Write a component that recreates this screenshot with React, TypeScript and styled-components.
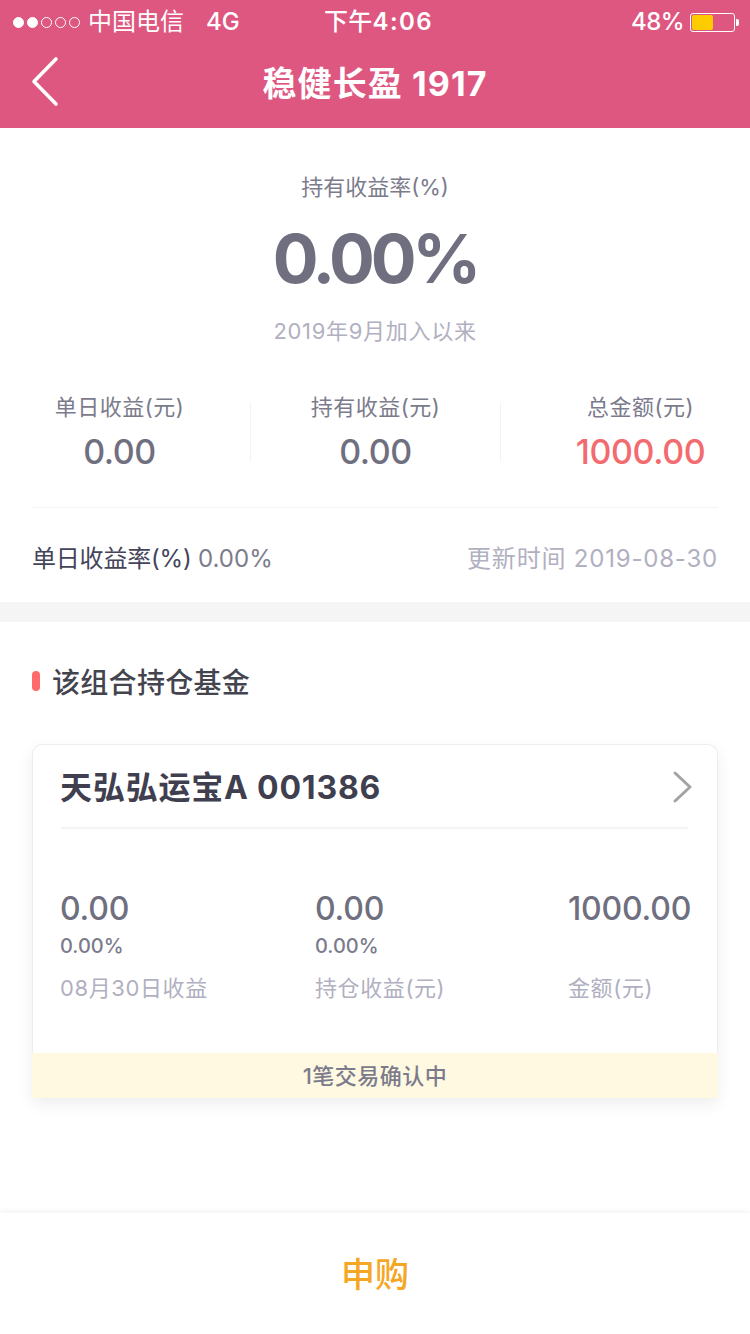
import React from "react";
import styled, { createGlobalStyle } from "styled-components";

const GlobalStyle = createGlobalStyle`
  html, body {
    margin: 0;
    padding: 0;
    background: #fff;
  }
  * {
    box-sizing: border-box;
  }
  body {
    font-family: Inter, "Noto Sans CJK SC", sans-serif;
  }
`;

const Page = styled.div`
  width: 750px;
  height: 1334px;
  display: flex;
  flex-direction: column;
  overflow: hidden;
  background: #fff;
`;

const Header = styled.header`
  height: 128px;
  background: #de5781;
  color: #fff;
`;

const StatusBar = styled.div`
  height: 40px;
  display: grid;
  grid-template-columns: 1fr auto 1fr;
  align-items: center;
  padding: 2px 12px 0 13px;
  font-size: 24px;
  line-height: 40px;
`;

const StatusLeft = styled.div`
  display: flex;
  align-items: center;
`;

const Signal = styled.div`
  display: flex;
  gap: 3px;
  margin-right: 8px;
`;

const Dot = styled.span<{ $on: boolean }>`
  width: 11px;
  height: 11px;
  border-radius: 50%;
  border: 1px solid #fff;
  background: ${(p) => (p.$on ? "#fff" : "transparent")};
`;

const Network = styled.span`
  margin-left: 22px;
  font-size: 24px;
  font-weight: 500;
`;

const Clock = styled.div`
  font-weight: 500;
  letter-spacing: 0.3px;
  padding-left: 6px;

  b {
    font-weight: 600;
    letter-spacing: 1.4px;
  }
`;

const StatusRight = styled.div`
  display: flex;
  align-items: center;
  justify-content: flex-end;
  font-weight: 500;
  letter-spacing: -0.6px;
`;

const Battery = styled.div`
  width: 45px;
  height: 19px;
  margin-left: 6px;
  margin-right: 3px;
  padding: 1px;
  border: 1px solid #fff;
  border-radius: 3px;
  position: relative;

  &::after {
    content: "";
    position: absolute;
    right: -5px;
    top: 5px;
    width: 3px;
    height: 7px;
    background: #fff;
    border-radius: 0 2px 2px 0;
  }
`;

const BatteryFill = styled.div`
  height: 100%;
  background: #ffcc00;
  border-radius: 2px;
`;

const NavBar = styled.div`
  height: 88px;
  display: flex;
  align-items: center;
  justify-content: center;
  position: relative;
`;

const BackIcon = styled.svg`
  position: absolute;
  left: 30px;
  top: 16px;
  width: 30px;
  height: 52px;
`;

const NavTitle = styled.h1`
  margin: 0;
  font-size: 34px;
  font-weight: 700;
  line-height: 44px;
  letter-spacing: 1.1px;
`;

const Summary = styled.section`
  padding: 40px 32px 0;
  height: 474px;
`;

const SummaryLabel = styled.div`
  text-align: center;
  font-size: 22px;
  line-height: 38px;
  color: #7b7b8c;
`;

const BigRate = styled.div`
  text-align: center;
  margin-top: 11px;
  font-size: 68px;
  line-height: 82px;
  font-weight: 700;
  letter-spacing: -4.2px;
  color: #6f6f80;
`;

const SinceText = styled.div`
  text-align: center;
  margin-top: 14px;
  font-size: 22px;
  line-height: 36px;
  letter-spacing: 0.7px;
  color: #b0b0c1;
`;

const Stats = styled.div`
  display: grid;
  grid-template-columns: 219px 250px 217px;
  margin-top: 53px;
  height: 106px;
  border-bottom: 1px solid #f3f3f5;
`;

const Stat = styled.div<{ $divider?: boolean; $left?: number; $right?: number }>`
  height: 60px;
  text-align: center;
  border-right: ${(p) => (p.$divider ? "1px solid #f3f3f5" : "none")};
  padding-left: ${(p) => p.$left ?? 0}px;
  padding-right: ${(p) => p.$right ?? 0}px;
`;

const StatLabel = styled.div`
  margin-top: -12px;
  font-size: 22px;
  line-height: 34px;
  letter-spacing: 0.5px;
  color: #7b7b8c;
`;

const StatValue = styled.div<{ $red?: boolean }>`
  margin-top: 3px;
  font-size: 34px;
  line-height: 50px;
  font-weight: 500;
  letter-spacing: -0.4px;
  color: ${(p) => (p.$red ? "#f26b6e" : "#6f6f80")};
`;

const RateRow = styled.div`
  display: flex;
  justify-content: space-between;
  align-items: center;
  height: 93px;
  padding-top: 3px;
  font-size: 24px;
`;

const RateLeft = styled.div`
  color: #44445a;
  white-space: nowrap;
  letter-spacing: -0.2px;

  span {
    color: #7b7b8c;
    letter-spacing: 0;
  }
`;

const RateRight = styled.div`
  color: #b0b0c1;
  letter-spacing: 0.8px;
`;

const Band = styled.div`
  height: 20px;
  background: #f5f5f5;
`;

const Holdings = styled.section`
  padding: 0 32px;
`;

const SectionTitle = styled.h2`
  margin: 0;
  height: 122px;
  padding-bottom: 4px;
  display: flex;
  align-items: center;
  gap: 12px;
  font-size: 28px;
  font-weight: 500;
  letter-spacing: 0.3px;
  color: #44444f;

  &::before {
    content: "";
    width: 8px;
    height: 20px;
    border-radius: 4px;
    background: #ff6b6b;
  }
`;

const Card = styled.div`
  height: 354px;
  display: flex;
  flex-direction: column;
  border: 1px solid #ededed;
  border-bottom: 0;
  border-radius: 10px 10px 0 0;
  box-shadow: 0 6px 16px rgba(0, 0, 0, 0.07);
  background: #fff;
`;

const CardHead = styled.div`
  margin: 0 29px 0 28px;
  height: 84px;
  display: flex;
  align-items: center;
  justify-content: space-between;
  border-bottom: 2px solid #f4f4f4;
`;

const FundName = styled.div`
  margin-left: -1px;
  padding-bottom: 2px;
  font-size: 32px;
  font-weight: 700;
  color: #3f3f50;
  letter-spacing: 0.8px;
`;

const ChevronIcon = styled.svg`
  width: 22px;
  height: 34px;
  margin: 2px -6px 0 0;
`;

const CardBody = styled.div`
  flex: 1;
  display: grid;
  grid-template-columns: 255px 253px auto;
  padding: 60px 0 0 27px;
`;

const Cell = styled.div`
  display: flex;
  flex-direction: column;
`;

const CellValue = styled.div`
  font-size: 32px;
  line-height: 40px;
  font-weight: 500;
  letter-spacing: -0.2px;
  color: #6f6f80;
`;

const CellRate = styled.div`
  height: 30px;
  margin-top: 2px;
  font-size: 20px;
  line-height: 30px;
  font-weight: 500;
  color: #7b7b8c;
`;

const CellLabel = styled.div`
  margin-top: 9px;
  font-size: 22px;
  line-height: 36px;
  letter-spacing: 0.6px;
  color: #b0b0c1;
`;

const Notice = styled.div`
  height: 45px;
  margin: 0 -1px;
  padding-bottom: 3px;
  display: flex;
  align-items: center;
  justify-content: center;
  background: #fff9e1;
  font-size: 22px;
  font-weight: 500;
  letter-spacing: 0.5px;
  color: #7b7b8c;
`;

const Footer = styled.footer`
  margin-top: auto;
  height: 121px;
  padding-bottom: 2px;
  display: flex;
  align-items: center;
  justify-content: center;
  background: #fff;
  box-shadow: 0 -2px 6px rgba(0, 0, 0, 0.05);
`;

const BuyLabel = styled.div`
  font-size: 34px;
  font-weight: 500;
  color: #f5a623;
`;

const stats = [
  { label: "单日收益(元)", value: "0.00", right: 43 },
  { label: "持有收益(元)", value: "0.00" },
  { label: "总金额(元)", value: "1000.00", left: 62, red: true },
];

const cells = [
  { value: "0.00", rate: "0.00%", label: "08月30日收益" },
  { value: "0.00", rate: "0.00%", label: "持仓收益(元)" },
  { value: "1000.00", rate: "", label: "金额(元)" },
];

const App: React.FC = () => {
  return (
    <Page>
      <GlobalStyle />
      <Header>
        <StatusBar>
          <StatusLeft>
            <Signal>
              {[true, true, false, false, false].map((on, i) => (
                <Dot key={i} $on={on} />
              ))}
            </Signal>
            中国电信
            <Network>4G</Network>
          </StatusLeft>
          <Clock>
            下午<b>4:06</b>
          </Clock>
          <StatusRight>
            48%
            <Battery>
              <BatteryFill style={{ width: "50%" }} />
            </Battery>
          </StatusRight>
        </StatusBar>
        <NavBar>
          <BackIcon viewBox="0 0 30 52" fill="none">
            <path
              d="M26 3 L4 25.5 L26 48"
              stroke="#fff"
              strokeWidth="3.6"
              strokeLinecap="round"
              strokeLinejoin="round"
            />
          </BackIcon>
          <NavTitle>稳健长盈 1917</NavTitle>
        </NavBar>
      </Header>

      <Summary>
        <SummaryLabel>持有收益率(%)</SummaryLabel>
        <BigRate>0.00%</BigRate>
        <SinceText>2019年9月加入以来</SinceText>
        <Stats>
          {stats.map((s, i) => (
            <Stat key={s.label} $divider={i < 2} $left={s.left} $right={s.right}>
              <StatLabel>{s.label}</StatLabel>
              <StatValue $red={s.red}>{s.value}</StatValue>
            </Stat>
          ))}
        </Stats>
        <RateRow>
          <RateLeft>
            单日收益率(%) <span>0.00%</span>
          </RateLeft>
          <RateRight>更新时间 2019-08-30</RateRight>
        </RateRow>
      </Summary>

      <Band />

      <Holdings>
        <SectionTitle>该组合持仓基金</SectionTitle>
        <Card>
          <CardHead>
            <FundName>天弘弘运宝A 001386</FundName>
            <ChevronIcon viewBox="0 0 22 34" fill="none">
              <path
                d="M3 3 L18 17 L3 31"
                stroke="#a3a3a3"
                strokeWidth="3"
                strokeLinecap="round"
                strokeLinejoin="round"
              />
            </ChevronIcon>
          </CardHead>
          <CardBody>
            {cells.map((c) => (
              <Cell key={c.label}>
                <CellValue>{c.value}</CellValue>
                <CellRate>{c.rate}</CellRate>
                <CellLabel>{c.label}</CellLabel>
              </Cell>
            ))}
          </CardBody>
          <Notice>1笔交易确认中</Notice>
        </Card>
      </Holdings>

      <Footer>
        <BuyLabel>申购</BuyLabel>
      </Footer>
    </Page>
  );
};

export default App;
